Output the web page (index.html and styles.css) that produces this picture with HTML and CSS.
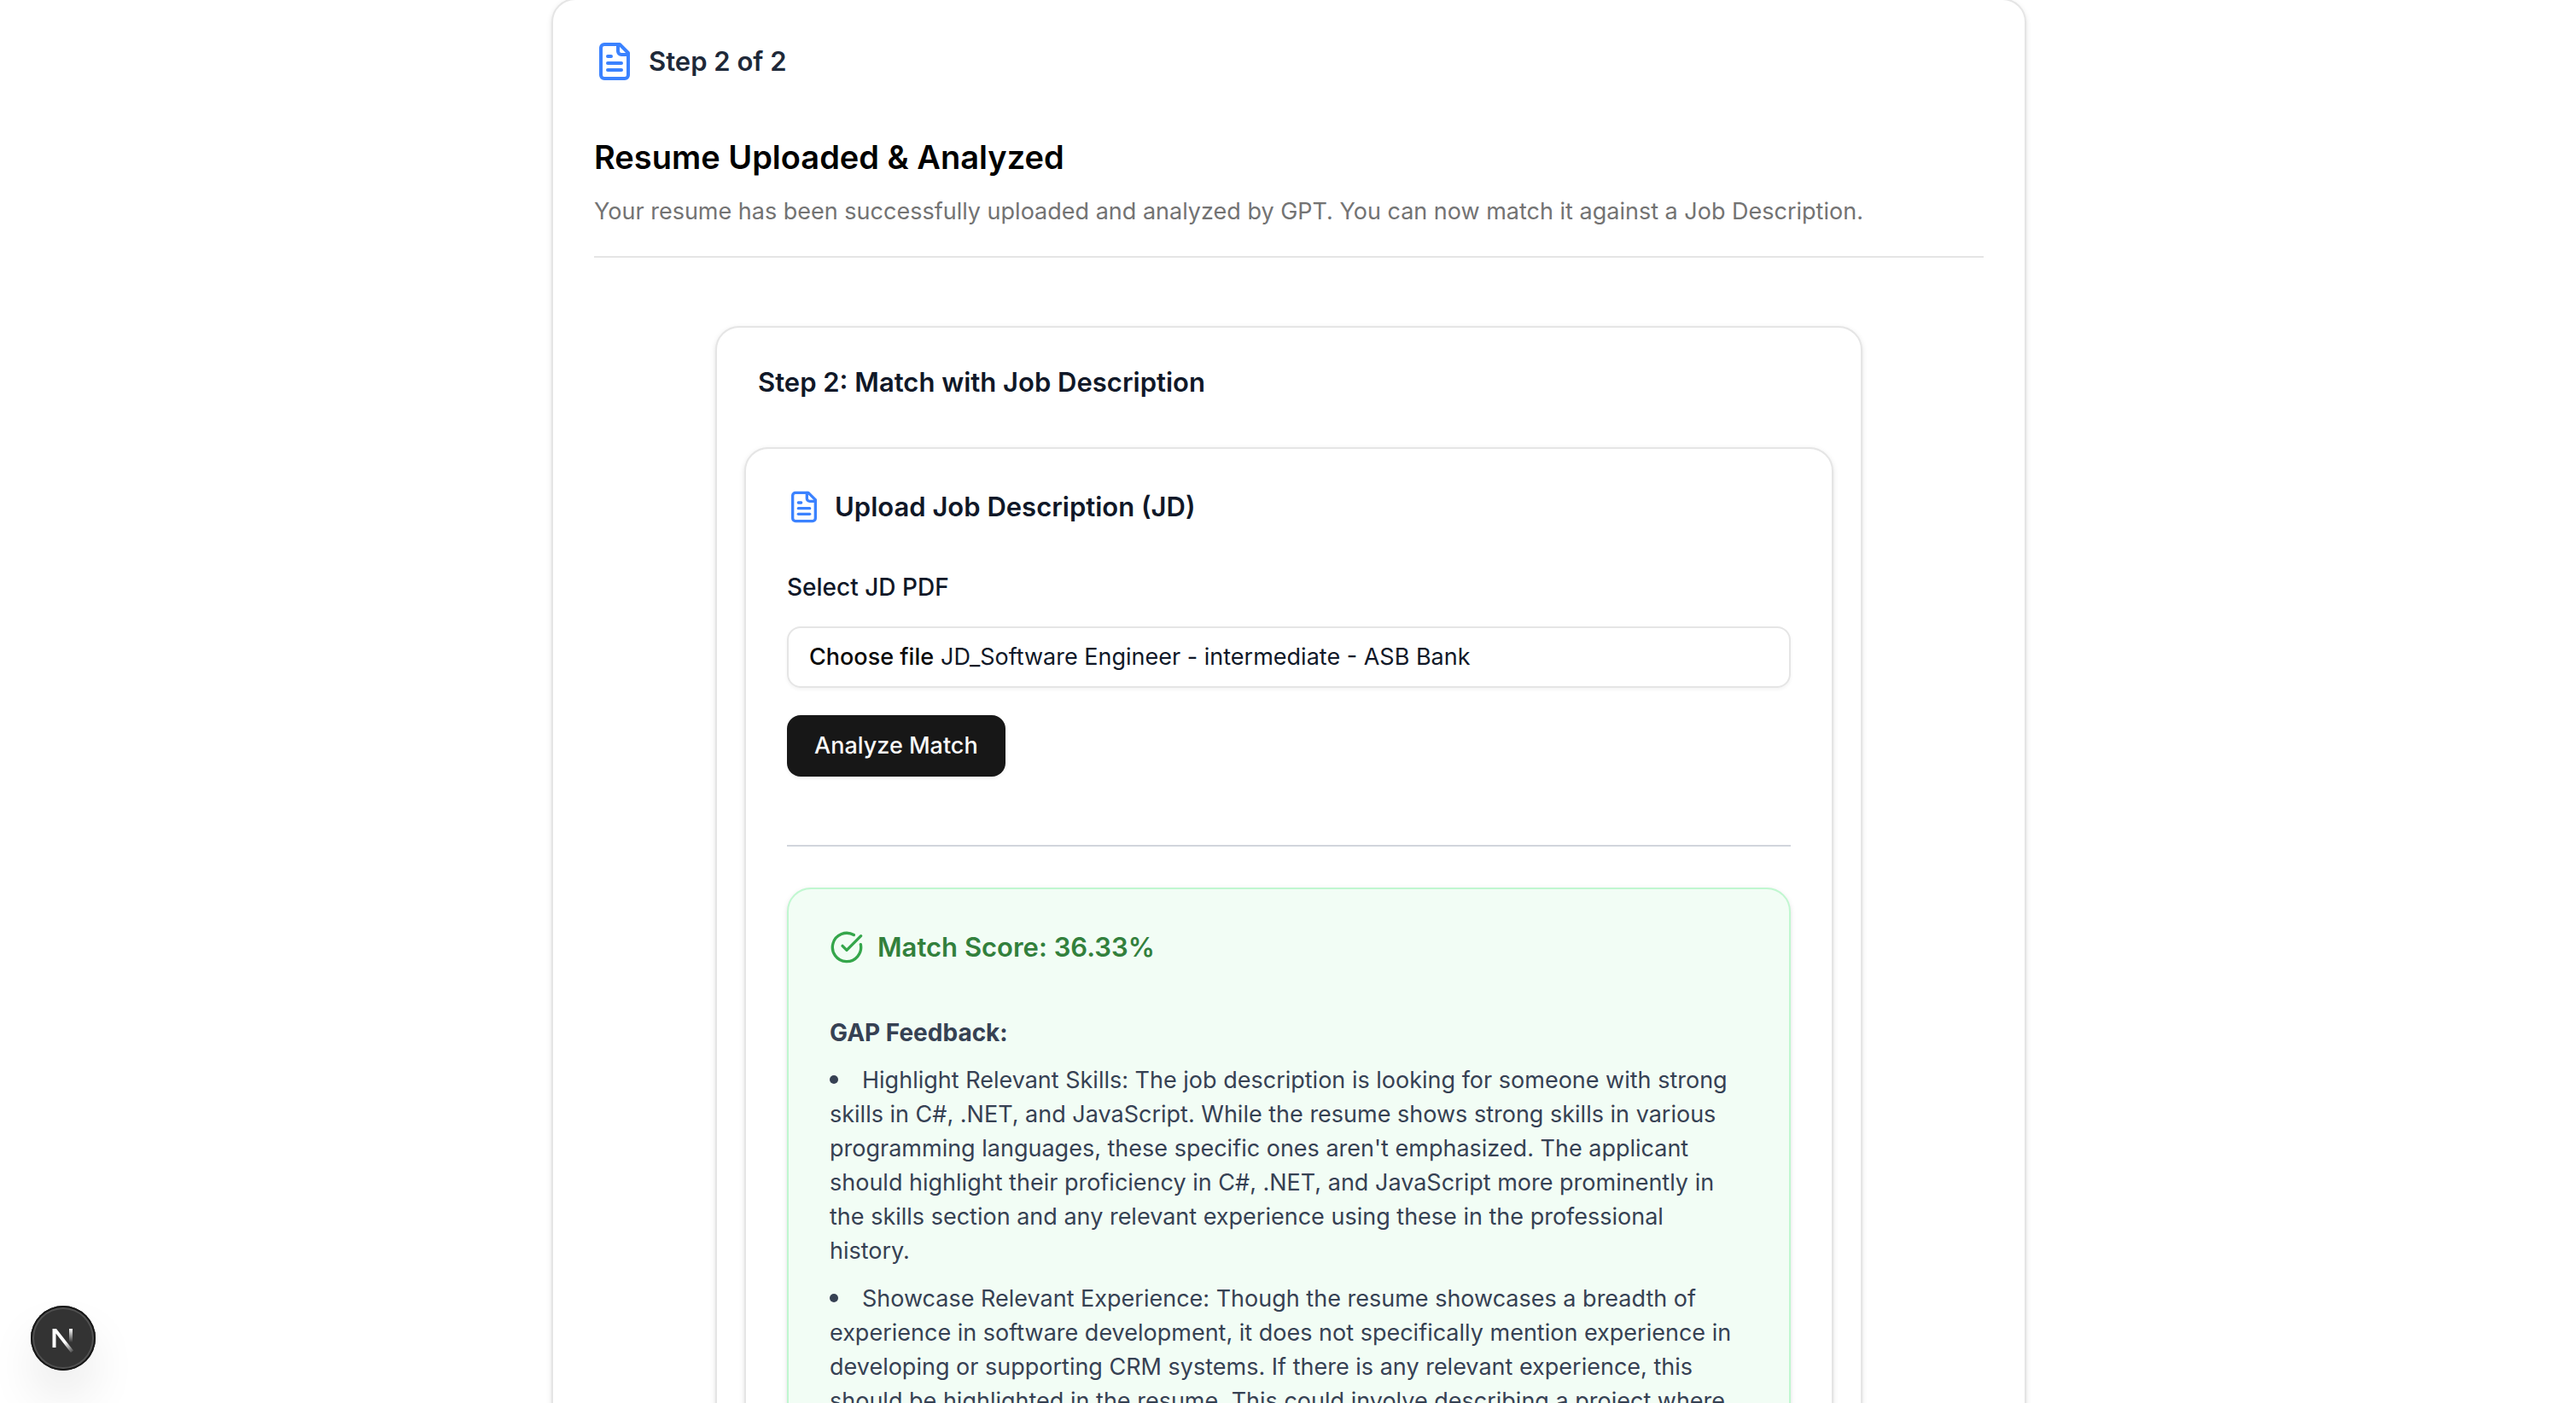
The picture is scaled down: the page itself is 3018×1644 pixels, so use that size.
FILE: index.html
```html
<!DOCTYPE html>
<html lang="en">
<head>
<meta charset="utf-8">
<meta name="viewport" content="width=device-width, initial-scale=1">
<title>Resume Match</title>
<link rel="stylesheet" href="styles.css">
</head>
<body>
<main class="card page-card">
  <div class="row step">
    <svg class="icon icon-lg icon-blue" viewBox="0 0 24 24" aria-hidden="true"><path d="M15 2H6a2 2 0 0 0-2 2v16a2 2 0 0 0 2 2h12a2 2 0 0 0 2-2V7Z"/><path d="M14 2v4a2 2 0 0 0 2 2h4"/><path d="M10 9H8"/><path d="M16 13H8"/><path d="M16 17H8"/></svg>
    <span>Step 2 of 2</span>
  </div>
  <header class="intro">
    <h1>Resume Uploaded &amp; Analyzed</h1>
    <p>Your resume has been successfully uploaded and analyzed by GPT. You can now match it against a Job Description.</p>
  </header>

  <section class="card match-card">
    <h2 class="heading match-title">Step 2: Match with Job Description</h2>
    <div class="card">
      <div class="row">
        <svg class="icon icon-blue" viewBox="0 0 24 24" aria-hidden="true"><path d="M15 2H6a2 2 0 0 0-2 2v16a2 2 0 0 0 2 2h12a2 2 0 0 0 2-2V7Z"/><path d="M14 2v4a2 2 0 0 0 2 2h4"/><path d="M10 9H8"/><path d="M16 13H8"/><path d="M16 17H8"/></svg>
        <h3 class="heading">Upload Job Description (JD)</h3>
      </div>
      <form class="form">
        <label class="label" for="jd">Select JD PDF</label>
        <div class="file">
          <span class="file-button">Choose file</span>
          <span>JD_Software Engineer - intermediate - ASB Bank</span>
          <input class="file-input" type="file" id="jd" accept="application/pdf">
        </div>
        <button class="button" type="button">Analyze Match</button>
      </form>
      <hr class="rule">
      <section class="card result">
        <div class="row">
          <svg class="icon icon-green" viewBox="0 0 24 24" aria-hidden="true"><path d="M21.801 10A10 10 0 1 1 17 3.335"/><path d="m9 11 3 3L22 4"/></svg>
          <h4 class="heading score">Match Score: 36.33%</h4>
        </div>
        <div class="feedback">
          <strong>GAP Feedback:</strong>
          <ul>
            <li>Highlight Relevant Skills: The job description is looking for someone with strong skills in C#, .NET, and JavaScript. While the resume shows strong skills in various programming languages, these specific ones aren't emphasized. The applicant should highlight their proficiency in C#, .NET, and JavaScript more prominently in the skills section and any relevant experience using these in the professional history.</li>
            <li>Showcase Relevant Experience: Though the resume showcases a breadth of experience in software development, it does not specifically mention experience in developing or supporting CRM systems. If there is any relevant experience, this should be highlighted in the resume. This could involve describing a project where</li>
          </ul>
        </div>
      </section>
    </div>
  </section>
</main>

<button class="dev-badge" type="button" aria-label="Open developer tools">
  <svg viewBox="0 0 76 76" fill="none" aria-hidden="true">
    <defs>
      <linearGradient id="fade-diagonal" gradientUnits="userSpaceOnUse" x1="40" y1="43" x2="50" y2="56"><stop stop-color="#fff"/><stop offset="1" stop-color="#fff" stop-opacity="0"/></linearGradient>
      <linearGradient id="fade-stem" gradientUnits="userSpaceOnUse" x1="47" y1="27" x2="47" y2="43"><stop stop-color="#fff"/><stop offset="1" stop-color="#fff" stop-opacity="0"/></linearGradient>
    </defs>
    <path d="M25.500 27H30L50 52.500L47 55L29.500 32.500V49H25.500Z" fill="url(#fade-diagonal)"/>
    <path d="M47 27V44" stroke="url(#fade-stem)" stroke-width="4"/>
  </svg>
</button>
</body>
</html>
```
FILE: styles.css
```css
* { box-sizing: border-box; }

html { overflow: hidden; }

body {
  margin: 0;
  padding-left: 2px;
  height: 100vh;
  overflow: hidden;
  background: #fff;
  color: #101828;
  font-family: Inter, "Liberation Sans", sans-serif;
  font-size: 27px;
  line-height: 40px;
}

h1, h2, h3, h4, p, ul { margin: 0; }

.card {
  padding: 48px;
  border: 2px solid #e5e5e5;
  border-radius: 28px;
  background: #fff;
  box-shadow: 0 2px 6px rgba(0, 0, 0, 0.1), 0 2px 4px -2px rgba(0, 0, 0, 0.1);
}

.page-card {
  max-width: 1728px;
  margin: -2px auto 0;
}

.row {
  display: flex;
  align-items: center;
  gap: 16px;
}

.step {
  color: #1e2939;
  font-size: 31px;
  font-weight: 600;
}

.icon {
  flex: none;
  width: 40px;
  height: 40px;
  fill: none;
  stroke: currentColor;
  stroke-width: 2;
  stroke-linecap: round;
  stroke-linejoin: round;
}

.icon-lg { width: 48px; height: 48px; }
.icon-blue { color: #3b82ff; }
.icon-green { color: #35a64b; }

.intro {
  display: flex;
  flex-direction: column;
  gap: 16px;
  margin-top: 60px;
  padding-bottom: 32px;
  border-bottom: 2px solid #e5e5e5;
  color: #737373;
}

.intro h1 {
  color: #000;
  font-size: 38px;
  font-weight: 600;
  line-height: 56px;
}

.heading {
  font-size: 31px;
  font-weight: 600;
  line-height: 32px;
}

.match-card {
  max-width: 1344px;
  margin: 80px auto 0;
  padding: 48px 32px;
}

.match-title { margin: 0 16px 60px; }

.form {
  display: flex;
  flex-direction: column;
  align-items: flex-start;
  gap: 32px;
  margin-top: 60px;
}

.label {
  font-size: 28px;
  font-weight: 500;
  line-height: 28px;
}

.file {
  position: relative;
  display: flex;
  align-items: center;
  gap: 8px;
  width: 100%;
  height: 72px;
  padding: 0 24px;
  border: 2px solid #e5e5e5;
  border-radius: 16px;
  box-shadow: 0 2px 4px rgba(0, 0, 0, 0.05);
}

.file-button {
  color: #0a0a0a;
  font-weight: 500;
}

/* The native picker covers the styled field so the whole field is clickable. */
.file-input {
  position: absolute;
  inset: 0;
  width: 100%;
  opacity: 0;
}

.button {
  height: 72px;
  padding: 0 32px;
  border: 0;
  border-radius: 16px;
  background: #171717;
  color: #fafafa;
  font: inherit;
  font-weight: 500;
  box-shadow: 0 2px 4px rgba(0, 0, 0, 0.05);
}

.rule {
  height: 2px;
  margin: 80px 0 48px;
  border: 0;
  background: #d1d5dc;
}

.result {
  border-color: #c0f7d0;
  background: #f2fdf5;
}

.score { color: #32803c; }

.feedback {
  margin-top: 60px;
  color: #364153;
}

.feedback strong {
  display: block;
  font-size: 28px;
  font-weight: 700;
}

.feedback ul {
  padding: 0;
  list-style: none;
}

.feedback li { margin-top: 16px; }

.feedback li::before {
  content: "";
  display: inline-block;
  width: 10px;
  height: 10px;
  margin-right: 28px;
  border-radius: 50%;
  background: currentColor;
  vertical-align: 5px;
}

.dev-badge {
  position: fixed;
  left: 36px;
  bottom: 38px;
  width: 76px;
  height: 76px;
  padding: 0;
  border: 0;
  border-radius: 50%;
  background: #333;
  box-shadow: inset 0 0 0 2px #171717, inset 0 0 0 4px #505050, 0 32px 64px -16px rgba(0, 0, 0, 0.24);
}

.dev-badge svg { display: block; }
```
